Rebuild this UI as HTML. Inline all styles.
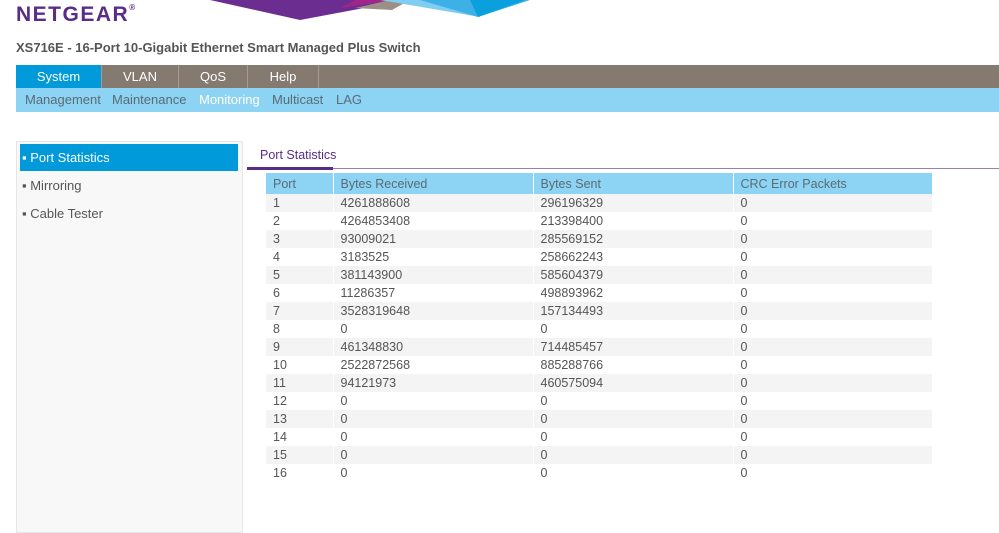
<!DOCTYPE html><html><head><style>
body{margin:0;width:999px;height:525px;overflow:hidden;background:#fff;font-family:"Liberation Sans",sans-serif;position:relative}
.a{position:absolute}
.logo{left:16px;top:3px;font-size:21px;font-weight:bold;color:#5b2c86;letter-spacing:1.5px}
.title{left:16px;top:40px;font-size:13px;font-weight:bold;color:#555}
.nav{left:16px;top:65px;width:983px;height:23px;background:#857a70}
.nav div{position:absolute;top:0;height:23px;line-height:23px;color:#fff;font-size:13px;text-align:center;border-right:1px solid #a59c94}
.sub{left:16px;top:88px;width:983px;height:24px;background:#8dd3f3;font-size:13px;line-height:24px;color:#5a6b75}
.sub span{position:absolute}
.left{left:16px;top:141px;width:225px;height:390px;background:#f8f8f8;border:1px solid #e6e6e6}
.li{position:absolute;left:3px;width:218px;height:27px;line-height:27px;font-size:13px;color:#555;padding-left:2px;box-sizing:border-box}
table{position:absolute;left:266px;top:173px;border-collapse:collapse;font-size:12.5px;color:#555;table-layout:fixed;width:666px}
td,th{height:18px;padding:0 0 0 7px;text-align:left;font-weight:normal}
th{background:#8dd3f3;height:21px;color:#5a6b75;border-right:1px solid #fff}
tr:nth-child(even) td{background:#f4f4f4}
td{border-right:1px solid #fff}
</style></head><body>
<svg class="a" style="left:0;top:0" width="999" height="30">
<polygon points="210,0 300,20 380,5 400,0" fill="#6b2d90"/>
<polygon points="340,8 360,5 400,0 355,0" fill="#a0268a"/>
<polygon points="355,8 390,0 410,0 392,10" fill="#9b8f86"/>
<polygon points="380,0 480,17 470,0" fill="#7fcdf1"/>
<polygon points="420,0 478,17 530,0" fill="#3db0e6"/>
<polygon points="470,0 478,17 525,0" fill="#0aa0de"/>
</svg>
<div class="a logo">NETGEAR<span style="font-size:8px;vertical-align:top">®</span></div>
<div class="a title">XS716E - 16-Port 10-Gigabit Ethernet Smart Managed Plus Switch</div>
<div class="a nav">
<div style="left:0;width:85px;background:#0099d9">System</div>
<div style="left:86px;width:76px">VLAN</div>
<div style="left:163px;width:68px">QoS</div>
<div style="left:232px;width:70px">Help</div>
</div>
<div class="a sub"><span style="left:9px">Management</span><span style="left:96px">Maintenance</span><span style="left:183px;color:#fff">Monitoring</span><span style="left:256px">Multicast</span><span style="left:320px">LAG</span></div>
<div class="a left">
<div class="li" style="top:2px;background:#0099d9;color:#fff">▪ Port Statistics</div>
<div class="li" style="top:30px">▪ Mirroring</div>
<div class="li" style="top:58px">▪ Cable Tester</div>
</div>
<div class="a" style="left:260px;top:148px;font-size:12.5px;color:#5b2c86">Port Statistics</div>
<div class="a" style="left:247px;top:168px;width:752px;height:1px;background:#9a7fae"></div>
<div class="a" style="left:247px;top:167px;width:86px;height:3px;background:#5b2c86"></div>
<table>
<colgroup><col style="width:67px"><col style="width:200px"><col style="width:200px"><col style="width:199px"></colgroup>
<tr><th>Port</th><th>Bytes Received</th><th>Bytes Sent</th><th>CRC Error Packets</th></tr>
<tr><td>1</td><td>4261888608</td><td>296196329</td><td>0</td></tr>
<tr><td>2</td><td>4264853408</td><td>213398400</td><td>0</td></tr>
<tr><td>3</td><td>93009021</td><td>285569152</td><td>0</td></tr>
<tr><td>4</td><td>3183525</td><td>258662243</td><td>0</td></tr>
<tr><td>5</td><td>381143900</td><td>585604379</td><td>0</td></tr>
<tr><td>6</td><td>11286357</td><td>498893962</td><td>0</td></tr>
<tr><td>7</td><td>3528319648</td><td>157134493</td><td>0</td></tr>
<tr><td>8</td><td>0</td><td>0</td><td>0</td></tr>
<tr><td>9</td><td>461348830</td><td>714485457</td><td>0</td></tr>
<tr><td>10</td><td>2522872568</td><td>885288766</td><td>0</td></tr>
<tr><td>11</td><td>94121973</td><td>460575094</td><td>0</td></tr>
<tr><td>12</td><td>0</td><td>0</td><td>0</td></tr>
<tr><td>13</td><td>0</td><td>0</td><td>0</td></tr>
<tr><td>14</td><td>0</td><td>0</td><td>0</td></tr>
<tr><td>15</td><td>0</td><td>0</td><td>0</td></tr>
<tr><td>16</td><td>0</td><td>0</td><td>0</td></tr>
</table>
</body></html>
